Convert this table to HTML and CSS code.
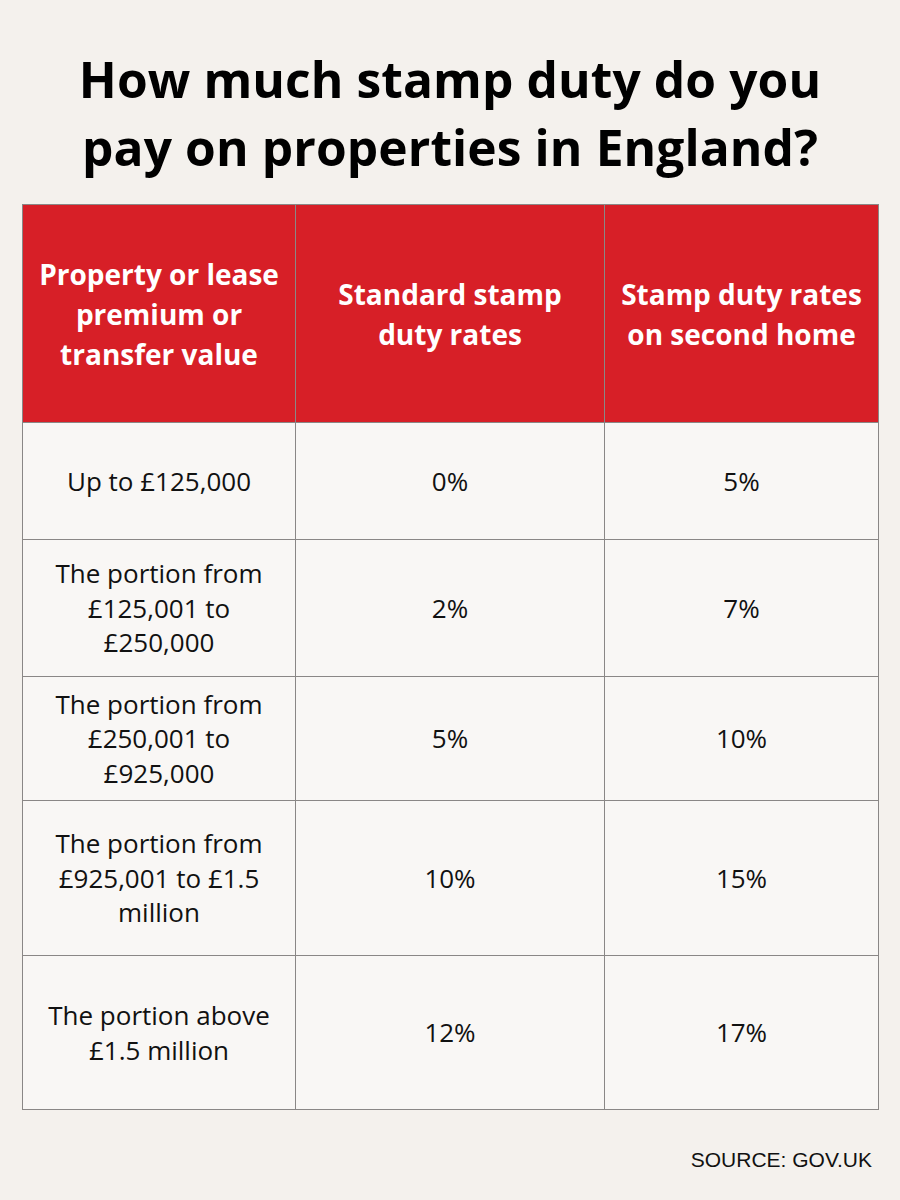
FILE: index.html
```
<!DOCTYPE html>
<html lang="en">
<head>
<meta charset="utf-8">
<title>Stamp duty in England</title>
<link rel="stylesheet" href="styles.css">
</head>
<body>
<main class="page">
  <h1 class="title">How much stamp duty do you<br>pay on properties in England?</h1>
  <table class="rates">
    <colgroup>
      <col class="col-a">
      <col class="col-b">
      <col class="col-c">
    </colgroup>
    <thead>
      <tr class="head-row">
        <th>Property or lease<br>premium or<br>transfer value</th>
        <th>Standard stamp<br>duty rates</th>
        <th>Stamp duty rates<br>on second home</th>
      </tr>
    </thead>
    <tbody>
      <tr class="r1"><td>Up to £125,000</td><td>0%</td><td>5%</td></tr>
      <tr class="r2"><td>The portion from<br>£125,001 to<br>£250,000</td><td>2%</td><td>7%</td></tr>
      <tr class="r3"><td>The portion from<br>£250,001 to<br>£925,000</td><td>5%</td><td>10%</td></tr>
      <tr class="r4"><td>The portion from<br>£925,001 to £1.5<br>million</td><td>10%</td><td>15%</td></tr>
      <tr class="r5"><td>The portion above<br>£1.5 million</td><td>12%</td><td>17%</td></tr>
    </tbody>
  </table>
  <p class="source">SOURCE: GOV.UK</p>
</main>
</body>
</html>
```
FILE: styles.css
```
html, body {
  margin: 0;
  padding: 0;
  background: #f4f1ed;
}
.page {
  width: 900px;
  height: 1200px;
  box-sizing: border-box;
  padding: 45px 22px 0 22px;
  display: flex;
  flex-direction: column;
}
.title {
  margin: 0;
  font-family: "Open Sans", sans-serif;
  font-weight: 700;
  font-size: 49.7px;
  line-height: 68px;
  color: #000;
  text-align: center;
  letter-spacing: 0.1px;
}
.rates {
  margin-top: 23px;
  width: 856px;
  border-collapse: collapse;
  table-layout: fixed;
}
.rates th, .rates td {
  border: 1px solid #8a8786;
  text-align: center;
  vertical-align: middle;
  padding: 0;
}
.rates th {
  background: #d71f27;
  color: #fff;
  font-family: "Open Sans", sans-serif;
  font-weight: 700;
  font-size: 28px;
  line-height: 40px;
}
.rates td {
  background: #f9f7f5;
  color: #111;
  font-family: "Open Sans", sans-serif;
  font-size: 26px;
  line-height: 34.5px;
}
.col-a { width: 273px; }
.col-b { width: 309px; }
.col-c { width: 274px; }
.head-row { height: 218px; }
.r1 { height: 117px; }
.r2 { height: 137px; }
.r3 { height: 124px; }
.r4 { height: 155px; }
.r5 { height: 154px; }
.source {
  margin: 38px 6px 0 0;
  text-align: right;
  font-family: "Liberation Sans", Arial, sans-serif;
  font-size: 21px;
  color: #111;
}
```
